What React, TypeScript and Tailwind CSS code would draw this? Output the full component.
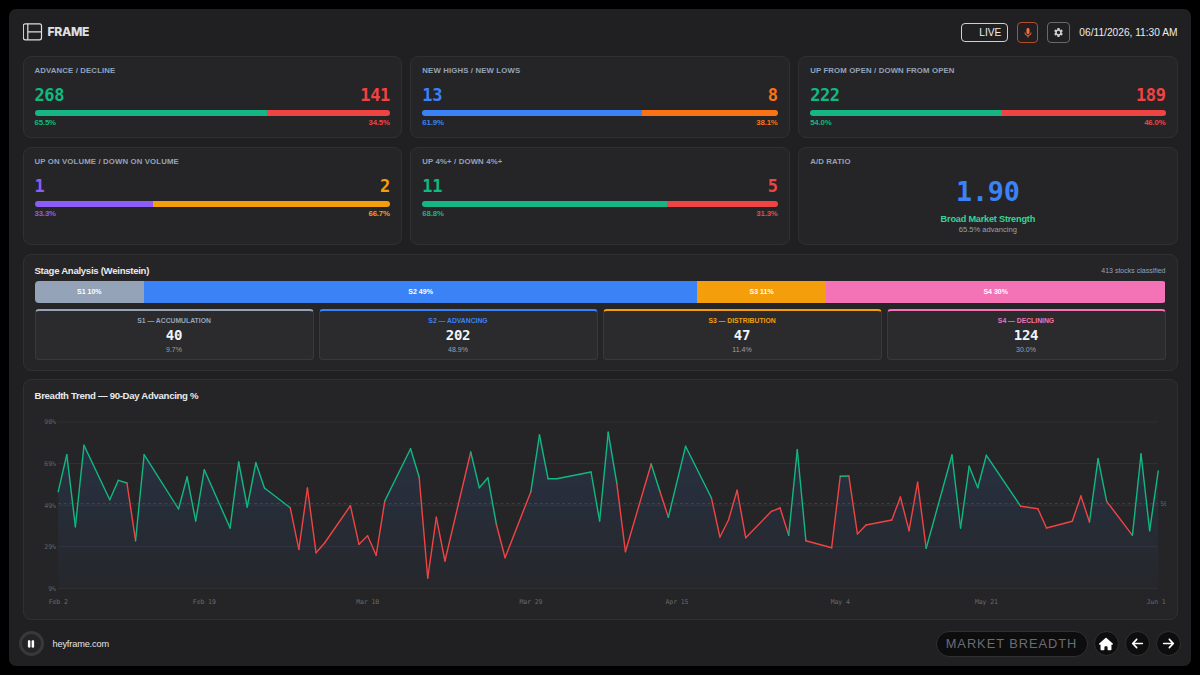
import type { ReactNode } from "react";
import { FaArrowLeft, FaArrowRight, FaHouse, FaPause } from "react-icons/fa6";
import { MdMic, MdSettings } from "react-icons/md";

interface Split {
  title: string;
  left: number;
  right: number;
  leftPct: string;
  rightPct: string;
  width: number;
  leftText: string;
  rightText: string;
  leftBar: string;
  rightBar: string;
}

const green = { text: "text-[#10b981]", bar: "bg-[#15b683]" };
const red = { text: "text-[#ef4444]", bar: "bg-[#ef4444]" };

const splits: Split[] = [
  {
    title: "ADVANCE / DECLINE",
    left: 268,
    right: 141,
    leftPct: "65.5%",
    rightPct: "34.5%",
    width: 65.5,
    leftText: green.text,
    rightText: red.text,
    leftBar: green.bar,
    rightBar: red.bar,
  },
  {
    title: "NEW HIGHS / NEW LOWS",
    left: 13,
    right: 8,
    leftPct: "61.9%",
    rightPct: "38.1%",
    width: 61.9,
    leftText: "text-[#3b82f6]",
    rightText: "text-[#f97316]",
    leftBar: "bg-[#3b82f6]",
    rightBar: "bg-[#f97316]",
  },
  {
    title: "UP FROM OPEN / DOWN FROM OPEN",
    left: 222,
    right: 189,
    leftPct: "54.0%",
    rightPct: "46.0%",
    width: 54,
    leftText: green.text,
    rightText: red.text,
    leftBar: green.bar,
    rightBar: red.bar,
  },
  {
    title: "UP ON VOLUME / DOWN ON VOLUME",
    left: 1,
    right: 2,
    leftPct: "33.3%",
    rightPct: "66.7%",
    width: 33.3,
    leftText: "text-[#8b5cf6]",
    rightText: "text-[#f59e0b]",
    leftBar: "bg-[#8b5cf6]",
    rightBar: "bg-[#f59e0b]",
  },
  {
    title: "UP 4%+ / DOWN 4%+",
    left: 11,
    right: 5,
    leftPct: "68.8%",
    rightPct: "31.3%",
    width: 68.8,
    leftText: green.text,
    rightText: red.text,
    leftBar: green.bar,
    rightBar: red.bar,
  },
];

const stages = [
  { id: "S1", name: "ACCUMULATION", count: 40, pct: "9.7%", short: "10%", bg: "bg-[#94a3b8]", text: "text-[#94a3b8]", border: "border-t-[#94a3b8]" },
  { id: "S2", name: "ADVANCING", count: 202, pct: "48.9%", short: "49%", bg: "bg-[#3b82f6]", text: "text-[#3b82f6]", border: "border-t-[#3b82f6]" },
  { id: "S3", name: "DISTRIBUTION", count: 47, pct: "11.4%", short: "11%", bg: "bg-[#f59e0b]", text: "text-[#f59e0b]", border: "border-t-[#f59e0b]" },
  { id: "S4", name: "DECLINING", count: 124, pct: "30.0%", short: "30%", bg: "bg-[#f472b6]", text: "text-[#f472b6]", border: "border-t-[#f472b6]" },
];

// [day, y, colour of the segment that leaves this point]
type Point = [number, number, "g" | "r"];

const trend: Point[] = [
  [0, 91.7, "g"], [1, 54.7, "g"], [2, 126.7, "g"], [3, 45.3, "g"], [6, 99.7, "g"],
  [7, 80.3, "g"], [8, 83, "r"], [9, 140.7, "g"], [10, 54.7, "g"], [14, 109, "g"],
  [15, 77, "g"], [16, 121, "g"], [17, 69.7, "g"], [20, 128, "g"], [21, 62, "g"],
  [22, 107, "g"], [23, 62.7, "g"], [24, 88, "g"], [27, 107.7, "r"], [28, 149.3, "r"],
  [29, 88, "r"], [30, 152.7, "r"], [31, 143, "r"], [34, 105.7, "r"], [35, 144.3, "r"],
  [36, 135.7, "r"], [37, 155.3, "r"], [38, 101, "g"], [41, 48.7, "g"], [42, 77, "r"],
  [43, 178, "r"], [44, 117.3, "r"], [45, 161, "r"], [48, 52, "g"], [49, 87.7, "g"],
  [50, 77.7, "g"], [51, 125, "r"], [52, 157.7, "r"], [55, 91.7, "g"], [56, 35, "g"],
  [57, 78.7, "g"], [58, 78.7, "g"], [62, 72, "g"], [63, 121, "g"], [64, 32.3, "g"],
  [65, 83.3, "r"], [66, 151.7, "r"], [69, 64, "g"], [70, 91, "r"], [71, 117.3, "g"],
  [73, 46.3, "g"], [76, 97.7, "r"], [77, 137, "r"], [78, 120, "r"], [79, 90.3, "r"],
  [80, 137.7, "r"], [83, 111.3, "r"], [84, 108, "r"], [85, 135.3, "g"], [86, 49.7, "g"],
  [87, 140.7, "r"], [90, 147.7, "r"], [91, 76.3, "g"], [92, 76, "r"], [93, 134, "r"],
  [94, 125, "r"], [97, 120, "r"], [98, 97, "r"], [99, 130.7, "r"], [100, 82.3, "r"],
  [101, 148.3, "g"], [104, 55, "g"], [105, 128, "g"], [106, 66.3, "g"], [107, 87.7, "g"],
  [108, 55.3, "g"], [112, 106.3, "r"], [114, 108.7, "r"], [115, 128, "r"], [118, 121.3, "r"],
  [119, 96, "r"], [120, 122, "g"], [121, 58.7, "g"], [122, 101.3, "r"], [125, 135.3, "g"],
  [126, 54, "g"], [127, 130.7, "g"], [128, 71, "g"],
];

const yTicks = [
  { label: "90%", y: 22 },
  { label: "69%", y: 63.6 },
  { label: "49%", y: 105.2 },
  { label: "29%", y: 146.7 },
  { label: "9%", y: 188.3 },
];

const xTicks = [
  { label: "Feb 2", day: 0 },
  { label: "Feb 19", day: 17 },
  { label: "Mar 10", day: 36 },
  { label: "Mar 29", day: 55 },
  { label: "Apr 15", day: 72 },
  { label: "May 4", day: 91 },
  { label: "May 21", day: 108 },
];

const x = (day: number) => 23.2 + day * 8.594;

function Card({ className, children }: { className: string; children: ReactNode }) {
  return <section className={`rounded-lg border border-[#303032] bg-[#252527] px-[11px] ${className}`}>{children}</section>;
}

function CardTitle({ children }: { children: ReactNode }) {
  return <h2 className="h-[10px] text-[7.8px] leading-[10px] font-bold tracking-[0.13px] text-[#94a3b8]">{children}</h2>;
}

function SplitCard({ item }: { item: Split }) {
  return (
    <Card className="pt-[9px]">
      <CardTitle>{item.title}</CardTitle>
      <div className="mt-[8px] flex h-[20px] justify-between pt-px font-['DejaVu_Sans_Mono',monospace] text-[17px] leading-[20px] font-bold tracking-[-0.4px]">
        <span className={item.leftText}>{item.left}</span>
        <span className={item.rightText}>{item.right}</span>
      </div>
      <div className="mt-[6px] flex h-[6px] overflow-hidden rounded-full">
        <div className={item.leftBar} style={{ width: `${item.width}%` }} />
        <div className={`flex-1 ${item.rightBar}`} />
      </div>
      <div className="mt-[2px] flex justify-between text-[7.8px] leading-[10px] font-bold tracking-[-0.15px]">
        <span className={item.leftText}>{item.leftPct}</span>
        <span className={item.rightText}>{item.rightPct}</span>
      </div>
    </Card>
  );
}

function TrendChart() {
  const outline = trend.map(([day, y]) => `${x(day)},${y}`).join(" ");

  return (
    <svg viewBox="0 0 1131 212" className="block h-[212px] w-full overflow-visible">
      <defs>
        <linearGradient id="area" x1="0" y1="22" x2="0" y2="188.3" gradientUnits="userSpaceOnUse">
          <stop offset="0" stopColor="#3b82f6" stopOpacity="0.15" />
          <stop offset="1" stopColor="#3b82f6" stopOpacity="0.02" />
        </linearGradient>
        <clipPath id="plot">
          <rect width="1131" height="212" />
        </clipPath>
      </defs>
      {yTicks.map((tick) => (
        <g key={tick.label}>
          <line x1={x(0)} x2={x(128)} y1={tick.y} y2={tick.y} stroke="#ffffff" strokeOpacity="0.06" />
          <text x="20.8" y={tick.y + 2.4} textAnchor="end" className="fill-[#626265] font-['DejaVu_Sans_Mono',monospace] text-[6.5px] tracking-[-0.1px]">
            {tick.label}
          </text>
        </g>
      ))}
      <line x1={x(0)} x2={x(128)} y1="103.6" y2="103.6" stroke="#ffffff" strokeOpacity="0.17" strokeWidth="0.8" strokeDasharray="2.8 2.8" />
      <g clipPath="url(#plot)">
        <text x="1125.2" y="106.2" className="fill-[#626265] font-['DejaVu_Sans_Mono',monospace] text-[6.5px] tracking-[-0.1px]">50%</text>
      </g>
      <polygon points={`${x(0)},188.3 ${outline} ${x(128)},188.3`} fill="url(#area)" />
      {trend.slice(1).map(([day, y], i) => (
        <line
          key={day}
          x1={x(trend[i][0])}
          y1={trend[i][1]}
          x2={x(day)}
          y2={y}
          stroke={trend[i][2] === "g" ? "#10b981" : "#ef4444"}
          strokeWidth="1.4"
          strokeLinecap="round"
        />
      ))}
      {xTicks.map((tick) => (
        <text key={tick.label} x={x(tick.day)} y="203.7" textAnchor="middle" className="fill-[#6a6a6d] font-['DejaVu_Sans_Mono',monospace] text-[6.5px] tracking-[-0.1px]">
          {tick.label}
        </text>
      ))}
      <text x="1130.6" y="203.7" textAnchor="end" className="fill-[#6a6a6d] font-['DejaVu_Sans_Mono',monospace] text-[6.5px] tracking-[-0.1px]">
        Jun 1
      </text>
    </svg>
  );
}

function Logo() {
  return (
    <div className="flex items-center gap-[5px] text-[#dedede]">
      <svg viewBox="0 0 20 18" className="h-[18px] w-5" fill="none" stroke="currentColor" strokeWidth="1.2">
        <rect x="0.3" y="0.8" width="18.2" height="16" rx="2" />
        <path d="M4.8 0.8v16M4.8 8.8h13.7" />
      </svg>
      <span className="font-['Inter',sans-serif] text-[12.1px] leading-4 font-extrabold tracking-[-0.3px]">FRAME</span>
    </div>
  );
}

function RoundButton({ label, children }: { label: string; children: ReactNode }) {
  return (
    <button type="button" aria-label={label} className="flex size-[25px] items-center justify-center rounded-full border border-[#303032] bg-[#0d0d0e] text-white">
      {children}
    </button>
  );
}

export default function App() {
  return (
    <div className="h-[675px] w-[1200px] bg-black p-[9px] font-['Liberation_Sans',Arial,sans-serif]">
      <main className="flex h-[657px] flex-col rounded-[7px] bg-[#202022] px-[13.5px]">
        <header className="flex h-[47px] items-center justify-between pb-px">
          <Logo />
          <div className="flex items-center pt-px text-[10.2px] text-[#ececec]">
            <div className="flex h-[19px] w-[47px] items-center justify-end rounded-[4px] border border-[#d0d0d0] pr-[6px]">LIVE</div>
            <button type="button" aria-label="Voice" className="ml-[9px] flex h-[21px] w-[21px] items-center justify-center rounded-[4px] border border-[#b54e2c] text-[#ff6b35]">
              <MdMic size={12} />
            </button>
            <button type="button" aria-label="Settings" className="ml-[9px] flex h-[21px] w-[23px] items-center justify-center rounded-[4px] border border-[#69696b] text-[#cfcfcf]">
              <MdSettings size={11} />
            </button>
            <time className="ml-[9px]">06/11/2026, 11:30 AM</time>
          </div>
        </header>

        <div className="grid grid-cols-3 grid-rows-[82px_98px] gap-x-[8.5px] gap-y-[9px]">
          {splits.map((item) => (
            <SplitCard key={item.title} item={item} />
          ))}
          <Card className="pt-[9px]">
            <CardTitle>A/D RATIO</CardTitle>
            <div className="flex flex-col items-center">
              <span className="mt-[9px] font-['DejaVu_Sans_Mono',monospace] text-[26.8px] leading-[32px] font-bold tracking-[-0.2px] text-[#3b82f6]">1.90</span>
              <span className="mt-[5px] text-[9.2px] leading-[12px] font-bold tracking-[-0.22px] text-[#34d399]">Broad Market Strength</span>
              <span className="text-[7.6px] leading-[10px] text-[#94a3b8]">65.5% advancing</span>
            </div>
          </Card>
        </div>

        <Card className="mt-[8.5px] h-[117.5px] pt-[9.5px]">
          <div className="flex h-[13px] items-center justify-between">
            <h2 className="text-[9.6px] leading-[13px] font-bold tracking-[-0.29px] text-[#e8eaed]">Stage Analysis (Weinstein)</h2>
            <span className="text-[7px] leading-[13px] text-[#94a3b8]">413 stocks classified</span>
          </div>
          <div className="mt-[4px] flex h-[21.5px] overflow-hidden rounded-[4px] text-[7px] font-bold text-white">
            {stages.map((stage) => (
              <div key={stage.id} className={`flex items-center justify-center pt-px ${stage.bg}`} style={{ width: `${(stage.count / 413) * 100}%` }}>
                {stage.id} {stage.short}
              </div>
            ))}
          </div>
          <div className="mt-[6.5px] grid grid-cols-4 gap-[5px]">
            {stages.map((stage) => (
              <div key={stage.id} className={`flex h-[51px] flex-col items-center rounded-[4px] border border-t-2 border-[#39393b] bg-[#2b2b2d] pt-[4px] ${stage.border}`}>
                <span className={`text-[6.8px] leading-[11px] font-bold ${stage.text}`}>
                  {stage.id} — {stage.name}
                </span>
                <span className="font-['DejaVu_Sans_Mono',monospace] text-[14px] leading-[19px] font-bold tracking-[-0.2px] text-[#f1f5f9]">{stage.count}</span>
                <span className="text-[7px] leading-[9px] text-[#94a3b8]">{stage.pct}</span>
              </div>
            ))}
          </div>
        </Card>

        <Card className="mt-2 h-[241px] pt-[9px]">
          <h2 className="h-[11px] text-[9.6px] leading-[13px] font-bold tracking-[-0.3px] text-[#e8eaed]">Breadth Trend — 90-Day Advancing %</h2>
          <TrendChart />
        </Card>

        <footer className="-ml-1 -mr-[3px] flex h-[46px] items-center justify-between pt-px">
          <div className="flex items-center gap-[9px]">
            <button type="button" aria-label="Pause" className="flex size-[25px] items-center justify-center rounded-full border-[3px] border-[#38383a] bg-[#242426] text-white">
              <FaPause size={10} />
            </button>
            <span className="pt-[2px] text-[9.2px] tracking-[-0.15px] text-[#e5e5e5]">heyframe.com</span>
          </div>
          <div className="flex items-center gap-[6px]">
            <div className="flex h-[26px] w-[152px] items-center justify-center rounded-full border border-[#303032] bg-[#0d0d0e] text-[12.8px] tracking-[0.98px] text-[#6b6b75]">
              MARKET BREADTH
            </div>
            <RoundButton label="Home">
              <FaHouse size={14} />
            </RoundButton>
            <RoundButton label="Previous">
              <FaArrowLeft size={13} />
            </RoundButton>
            <RoundButton label="Next">
              <FaArrowRight size={13} />
            </RoundButton>
          </div>
        </footer>
      </main>
    </div>
  );
}
